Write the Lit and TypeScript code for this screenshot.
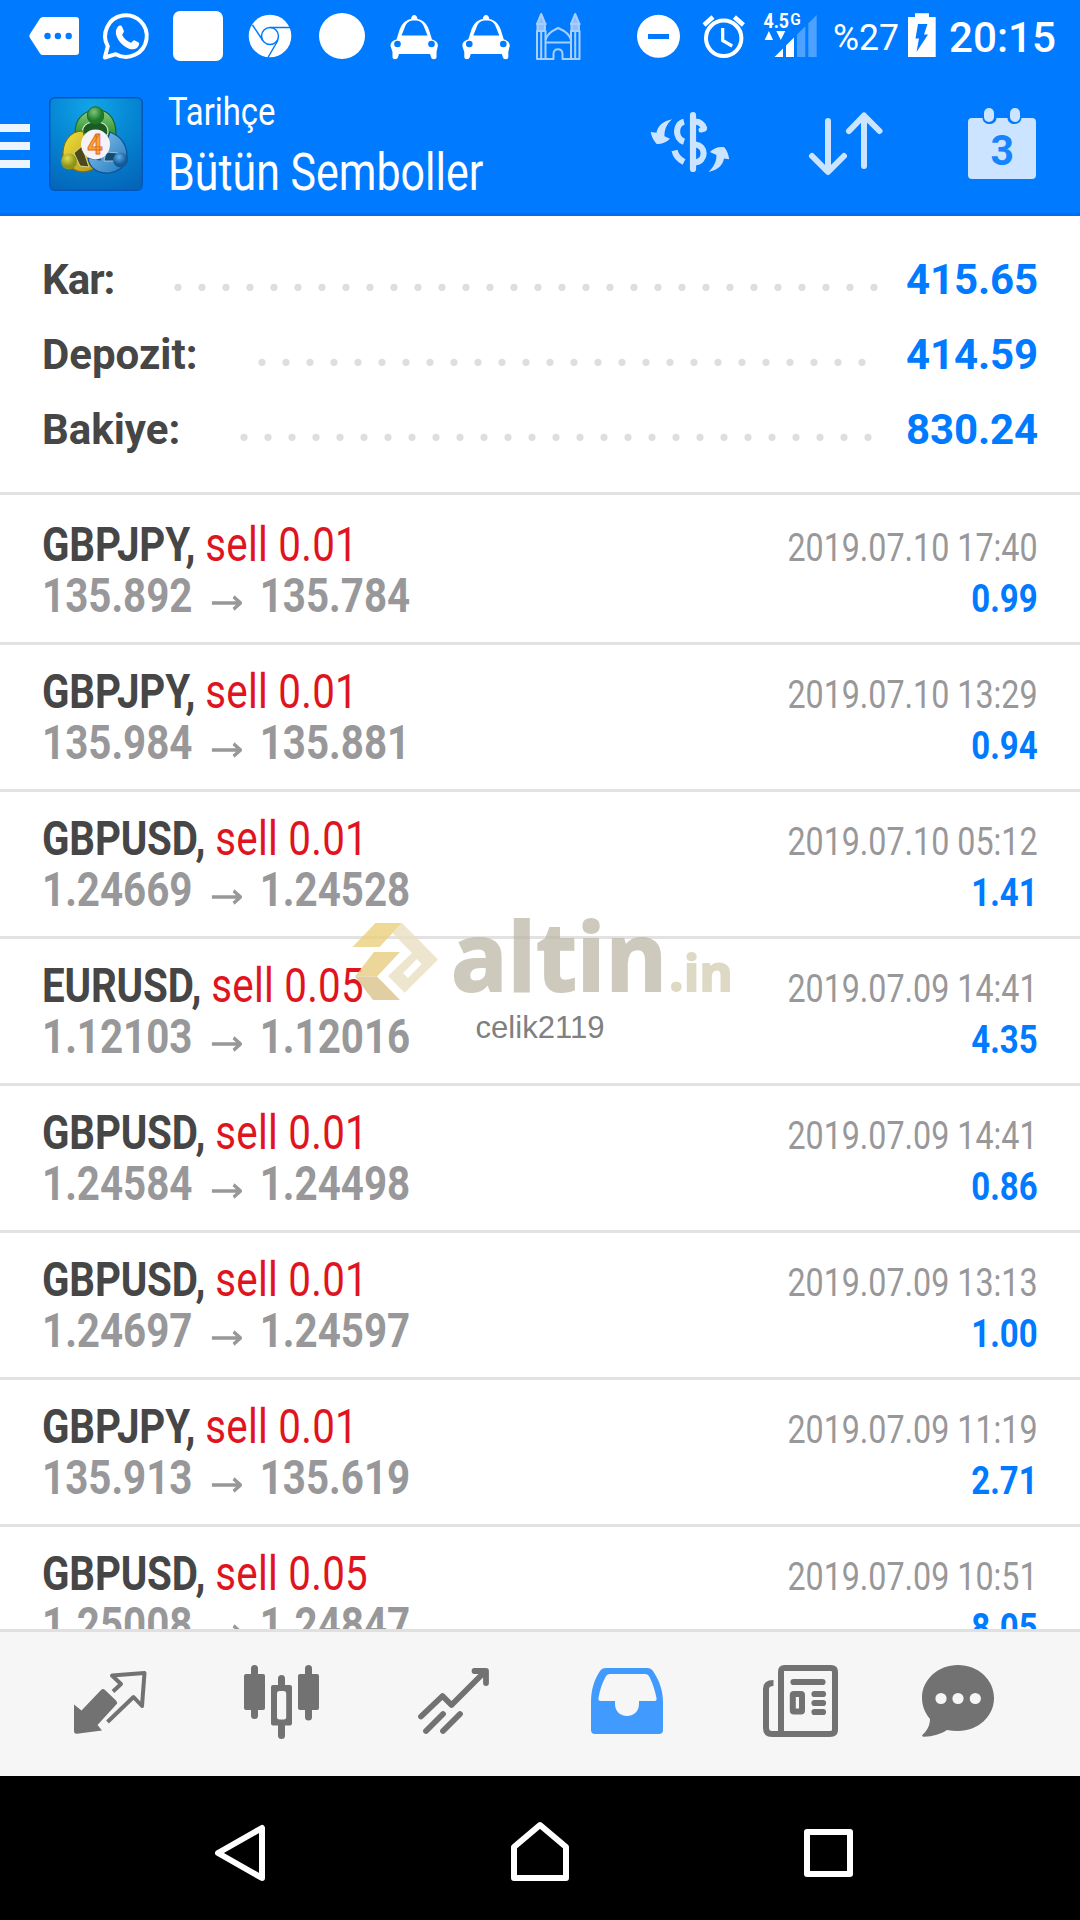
import { LitElement, html, svg, css } from "lit";
import { customElement, property } from "lit/decorators.js";
import { classMap } from "lit/directives/class-map.js";

interface Deal {
  symbol: string;
  volume: string;
  open: string;
  close: string;
  time: string;
  profit: string;
}

const deals: Deal[] = [
  { symbol: "GBPJPY", volume: "0.01", open: "135.892", close: "135.784", time: "2019.07.10 17:40", profit: "0.99" },
  { symbol: "GBPJPY", volume: "0.01", open: "135.984", close: "135.881", time: "2019.07.10 13:29", profit: "0.94" },
  { symbol: "GBPUSD", volume: "0.01", open: "1.24669", close: "1.24528", time: "2019.07.10 05:12", profit: "1.41" },
  { symbol: "EURUSD", volume: "0.05", open: "1.12103", close: "1.12016", time: "2019.07.09 14:41", profit: "4.35" },
  { symbol: "GBPUSD", volume: "0.01", open: "1.24584", close: "1.24498", time: "2019.07.09 14:41", profit: "0.86" },
  { symbol: "GBPUSD", volume: "0.01", open: "1.24697", close: "1.24597", time: "2019.07.09 13:13", profit: "1.00" },
  { symbol: "GBPJPY", volume: "0.01", open: "135.913", close: "135.619", time: "2019.07.09 11:19", profit: "2.71" },
  { symbol: "GBPUSD", volume: "0.05", open: "1.25008", close: "1.24847", time: "2019.07.09 10:51", profit: "8.05" },
];

const totals = [
  { label: "Kar:", value: "415.65", from: 177.5, dots: 30, tight: true },
  { label: "Depozit:", value: "414.59", from: 261, dots: 26, tight: false },
  { label: "Bakiye:", value: "830.24", from: 242.8, dots: 27, tight: false },
];

// Each icon is drawn in screen units; the viewBox selects the slice it occupies.
const slice = (x: number, y: number, w: number, h: number, body: unknown) =>
  html`<svg width=${w} height=${h} viewBox="${x} ${y} ${w} ${h}">${body}</svg>`;

const taxi = (dx: number) => svg`<g transform="translate(${dx} 0)">
  <path fill="#fff" d="M391 47.500c-1.500-3.500 1-7 5.500-8l2.500-8c2-7 6-11.500 12-12.500.5-5.500 6-5.500 6.500 0 6 1 10 5.500 12 12.500l2.500 8c4.500 1 7 4.500 5.500 8l-1 4.500v5c0 3-5 3-5.500 0l-1-3h-31l-1 3c-.5 3-5.500 3-5.500 0v-5z"/>
  <path fill="#007aff" d="M401.500 35.500l3-7.500c2-6 5-7.500 10-7.500s8 1.500 10 7.500l3 7.500z"/>
  <circle cx="397.500" cy="44" r="3.300" fill="#007aff"/><circle cx="431.500" cy="44" r="3.300" fill="#007aff"/>
</g>`;

@customElement("status-bar")
class StatusBar extends LitElement {
  static styles = css`
    :host { display: flex; height: 72px; color: #fff; }
    svg { display: block; flex: none; }
    text { font-family: Roboto, sans-serif; fill: #fff; }
  `;
  render() {
    return html`
      ${slice(0, 0, 91, 72, svg`
        <path fill="#fff" d="M43 17h33a3 3 0 0 1 3 3v32a3 3 0 0 1-3 3H43q-2 0-3-1.500L30 38q-1.500-2 0-4l10-15.500Q41 17 43 17z"/>
        <g fill="#007aff"><circle cx="47.500" cy="36" r="3.200"/><circle cx="57.900" cy="36" r="3.200"/><circle cx="68.700" cy="36" r="3.200"/></g>`)}
      ${slice(91, 0, 70, 72, svg`
        <path fill="none" stroke="#fff" stroke-width="4" stroke-linejoin="round" d="M104.800 57.500l3-11.300a20.800 20.800 0 1 1 8 8z"/>
        <path fill="#fff" d="M118 26.500c1.500-1.500 3.500-1.200 4.200.4l1.700 4.200c.5 1.300-2.200 3-1.600 4.200 2 3.600 4.500 5.800 8 7.300 1.400.6 2.700-3 4-2.400l4.300 2.300c1.500.9-.3 4.500-1.700 5.500-5 3.500-11.500-.5-15.400-4.300-4.200-4.200-8.300-11.700-3.500-17.200z"/>`)}
      ${slice(161, 0, 74, 72, svg`<rect x="173" y="11" width="50" height="50" rx="7" fill="#fff"/>`)}
      ${slice(235, 0, 71, 72, svg`
        <circle cx="270" cy="36" r="21.300" fill="#fff"/>
        <g fill="none" stroke="#007aff" stroke-width="1.500">
          <circle cx="270" cy="36" r="8.500"/>
          <path d="M270 27.500h20M262.500 40L252.500 25M277.800 40.500L268 57.500"/>
        </g>`)}
      ${slice(306, 0, 71, 72, svg`<circle cx="342" cy="36" r="23" fill="#fff"/>`)}
      ${slice(377, 0, 73, 72, taxi(0))}
      ${slice(450, 0, 72, 72, taxi(71.8))}
      ${slice(522, 0, 100, 72, svg`
        <g fill="none" stroke="#a9cfff" stroke-width="2" stroke-linejoin="round">
          <path d="M537 59V31h8.500v28zM571 59V31h8.500v28zM541.200 31v28M575.200 31v28"/>
          <path d="M545.500 59h8v-5c0-6.500 9-6.500 9 0v5h8.500M545.500 42.500h25.500M545.500 40c1-5 6-9 12.700-12 6.800 3 12 7 12.800 12"/>
          <path d="M537.500 31v-8l3.700-9 3.700 9v8zM571.500 31v-8l3.700-9 3.700 9v8z" fill="#8ec0ff"/>
          <path d="M536 24h10.500M570 24h10.500"/>
        </g>`)}
      ${slice(622, 0, 70, 72, svg`<circle cx="658.500" cy="36.300" r="21.500" fill="#fff"/><path fill="#007aff" d="M648 34h21v5h-21z"/>`)}
      ${slice(692, 0, 64, 72, svg`
        <g fill="none" stroke="#fff" stroke-width="4">
          <circle cx="723.700" cy="38.300" r="17.700"/>
          <path d="M722.700 28v12.500l9.500 5.500" stroke-width="3.200"/>
          <path d="M704 25l9-8M743.400 25l-9-8" stroke-width="4.600"/>
        </g>`)}
      ${slice(756, 0, 70, 72, svg`
        <text x="763.500" y="27.700" font-size="20.500" font-weight="700" textLength="25.500" lengthAdjust="spacingAndGlyphs">4.5</text>
        <text x="790.300" y="25.300" font-size="16" font-weight="600" textLength="10.500" lengthAdjust="spacingAndGlyphs">G</text>
        <path fill="#fff" d="M764.700 40l4.200-9 4.200 9zM776.300 31h9l-4.500 9zM774.500 57l8.500-8.500V57zM786 45.500l8-8V57h-8z"/>
        <path fill="#4da2ff" d="M797 34.500l8.300-8.300V57H797zM808.300 23.300l8.400-8.400V57h-8.400z"/>`)}
      ${slice(826, 0, 76, 72, svg`<text x="833" y="50.300" font-size="37" textLength="66" lengthAdjust="spacingAndGlyphs">%27</text>`)}
      ${slice(902, 0, 40, 72, svg`
        <path fill="#fff" d="M908 17h7v-3.700h14V17h6.700v40H908z"/>
        <path fill="#007aff" d="M918 24h9.500l-3.500 10.500h4L916.500 52l2.500-13.500h-3.500z"/>`)}
      ${slice(942, 0, 138, 72, svg`<text x="949" y="52" font-size="42" font-weight="500" textLength="107" lengthAdjust="spacingAndGlyphs">20:15</text>`)}
    `;
  }
}

@customElement("title-bar")
class TitleBar extends LitElement {
  static styles = css`
    :host { display: flex; height: 144px; box-sizing: border-box; border-bottom: 3px solid #006fee; color: #fff; }
    svg { display: block; flex: none; }
    .titles { flex: 1; padding-top: 16px; font-family: Roboto, sans-serif; white-space: nowrap; }
    .caption { font-size: 39px; line-height: 48px; transform: scaleX(0.842); transform-origin: left; }
    .name { font-size: 51px; line-height: 73px; transform: scaleX(0.842); transform-origin: left; }
    text { font-family: Roboto, sans-serif; }
  `;
  render() {
    return html`
      ${slice(0, 72, 44, 141, svg`<path fill="#ebf4ff" d="M0 124h30v8H0zM0 142h30v8H0zM0 160h30v8H0z"/>`)}
      ${slice(44, 72, 124, 141, svg`
        <defs>
          <radialGradient id="bg" cx=".45" cy=".1" r="1"><stop offset="0" stop-color="#11a5e8"/><stop offset=".5" stop-color="#0584d2"/><stop offset="1" stop-color="#0464b8"/></radialGradient>
          <linearGradient id="gr" x2="0" y2="1"><stop offset="0" stop-color="#8fcb8a"/><stop offset=".5" stop-color="#4aa545"/><stop offset="1" stop-color="#1d7a22"/></linearGradient>
          <linearGradient id="ye" x2="1" y2="1"><stop offset="0" stop-color="#f2e43c"/><stop offset="1" stop-color="#b5951a"/></linearGradient>
          <linearGradient id="bl" x2="1" y2="1"><stop offset="0" stop-color="#8cc6ee"/><stop offset="1" stop-color="#1f78bd"/></linearGradient>
          <radialGradient id="hg" cx=".4" cy=".3"><stop offset="0" stop-color="#7fc47c"/><stop offset="1" stop-color="#1c7a2a"/></radialGradient>
          <radialGradient id="hy" cx=".4" cy=".3"><stop offset="0" stop-color="#e0dc50"/><stop offset="1" stop-color="#8f9418"/></radialGradient>
          <radialGradient id="hb" cx=".4" cy=".3"><stop offset="0" stop-color="#62b0e6"/><stop offset="1" stop-color="#125a9c"/></radialGradient>
        </defs>
        <rect x="49.750" y="97.750" width="92.500" height="92.500" rx="5" fill="url(#bg)" stroke="#0457b8" stroke-width="1.500"/>
        <g stroke-linejoin="round" stroke-width="1.200">
          <path d="M76 140c-4-17 5-29 19.500-30S119 122 115 143l-9-4-22 0z" fill="url(#gr)" stroke="#16662a"/>
          <path d="M83 134c-2-8 4-12 12.500-12s14 4 12 13z" fill="#1c5a24" stroke="#c4e6bf"/>
          <path d="M83 131c-14 0-21 12-20 26 0 4 2 6 5 8 8 8 18 9 27 3l-6-14z" fill="url(#ye)" stroke="#7c6d14"/>
          <path d="M82 146l-8 7 6 13 9 1z" fill="#4a4a1c" stroke="#efe9a0" stroke-width=".8"/>
          <path d="M110 132c13 5 18 15 17 29-2 5-9 11-18 12-12 1-20-6-21-15l12 2z" fill="url(#bl)" stroke="#0e5190"/>
          <path d="M106 152l12 1-4 8-10 0z" fill="#164a70" stroke="#b5daf2" stroke-width=".8"/>
        </g>
        <ellipse cx="95.500" cy="115.500" rx="8.200" ry="8.800" fill="url(#hg)" stroke="#1c6a26"/>
        <circle cx="69" cy="161.500" r="8" fill="url(#hy)"/>
        <circle cx="120.500" cy="160" r="7.500" fill="url(#hb)"/>
        <ellipse cx="95.500" cy="144.500" rx="14.500" ry="15" fill="#f4f2f6"/>
        <text x="95" y="154" font-size="27" font-weight="700" text-anchor="middle" fill="#ffa42e" stroke="#e0651e" stroke-width=".8">4</text>`)}
      <div class="titles">
        <div class="caption">Tarihçe</div>
        <div class="name">Bütün Semboller</div>
      </div>
      ${slice(620, 72, 150, 141, svg`
        <g fill="none" stroke="#cce4ff" stroke-width="6.200">
          <path d="M684 121.700c-9 2-9.500 17 0 20M695 121.700c5 0 8 3 9.500 7.500"/>
          <path d="M674.500 150.500c1.500 6 4.500 9 9.500 11.500M695 144.500c11.500 1 11.500 16.500 0 18"/>
          <path d="M701 130l3.300-1" stroke-linecap="round" stroke-width="5"/>
          <path d="M693 115v54" stroke-linecap="round"/>
        </g>
        <path fill="#cce4ff" d="M672 119.300c-9.500 2-14.500 7-15.500 13.500l-5.800-.8c.8 5 3.500 9.500 6 12 4.500.3 9-1.300 13.300-5.300l-5.500-2.500c-.3-6 2-12 7.500-16.900z"/>
        <path fill="#cce4ff" d="M708.500 172c9.500-2 14.500-7 15.500-13.500l5.200.8c-.8-5-2.500-9.500-5-12-5.500-.8-10 .8-14.300 4.800l6.500 3c.3 6-2.400 12-7.900 16.900z"/>`)}
      ${slice(770, 72, 150, 141, svg`
        <g fill="none" stroke="#cce4ff" stroke-width="6" stroke-linecap="round" stroke-linejoin="round">
          <path d="M828 121v50M812 156l16 16 16-16M864 166v-50M849 131l15-15.500L879.500 131"/>
        </g>`)}
      ${slice(920, 72, 160, 141, svg`
        <path fill="#cce4ff" d="M972 118h10.500c.5 8 13.500 8 14 0h11c.5 8 13.500 8 14 0H1032a4 4 0 0 1 4 4v53a4 4 0 0 1-4 4h-60a4 4 0 0 1-4-4v-53a4 4 0 0 1 4-4z"/>
        <rect x="984" y="108" width="10" height="14" rx="5" fill="#cce4ff"/><rect x="1010" y="108" width="10" height="14" rx="5" fill="#cce4ff"/>
        <text x="990.500" y="165" font-size="43" font-weight="700" textLength="23.500" lengthAdjust="spacingAndGlyphs" fill="#1684ff">3</text>`)}
    `;
  }
}

@customElement("balance-summary")
class BalanceSummary extends LitElement {
  static styles = css`
    :host { display: block; height: 279px; box-sizing: border-box; padding-top: 26px; border-bottom: 3px solid #e2e2e2; font-family: Roboto, sans-serif; }
    .line { display: grid; grid-template-columns: 1fr auto; height: 75px; padding: 0 42px; line-height: 75px; font-size: 42px; font-weight: 700; }
    .label { display: flex; color: #464646; }
    .value { color: #007aff; letter-spacing: -0.1px; }
    .name { flex: 1; }
    .tight { letter-spacing: -1px; }
    svg { display: block; flex: none; }
  `;
  render() {
    return totals.map(
      (t) => html`<div class="line">
        <div class="label">
          <span class=${classMap({ name: true, tight: t.tight })}>${t.label}</span>
          <svg width=${915 - t.from} height="75" viewBox="${t.from - 10} 0 ${915 - t.from} 75">
            ${Array.from({ length: t.dots }, (_, i) => svg`<circle cx=${t.from + i * 24} cy="45.300" r="3.600" fill="#dedede"/>`)}
          </svg>
        </div>
        <span class="value">${t.value}</span>
      </div>`,
    );
  }
}

@customElement("deal-row")
class DealRow extends LitElement {
  @property({ attribute: false }) deal!: Deal;
  static styles = css`
    :host { display: flex; justify-content: space-between; flex: none; height: 147px; box-sizing: border-box; padding: 21px 42px 0; border-bottom: 3px solid #e2e2e2; font-family: Roboto, sans-serif; white-space: nowrap; }
    .left { font-size: 48px; line-height: 51px; transform: scaleX(0.84); transform-origin: left; }
    .symbol { font-weight: 700; color: #464646; letter-spacing: -0.2px; }
    .side { color: #e0141e; letter-spacing: 0.3px; }
    .prices { display: flex; font-weight: 700; color: #98989a; }
    .arrow { display: block; margin: 0 21.5px 0 22.5px; }
    .right { padding-top: 3px; font-size: 39.5px; line-height: 51px; text-align: right; }
    .time { color: #98989a; transform: scaleX(0.816); transform-origin: right; }
    .profit { font-weight: 700; color: #007aff; transform: scaleX(0.835); transform-origin: right; }
  `;
  render() {
    const d = this.deal;
    return html`
      <div class="left">
        <div><span class="symbol">${d.symbol},</span> <span class="side">sell ${d.volume}</span></div>
        <div class="prices">
          <span>${d.open}</span>
          <svg class="arrow" width="36" height="51" viewBox="0 0 36 51">
            <path d="M0 33h34M26 26.800l8.300 6.200-8.300 6.200" fill="none" stroke="#98989a" stroke-width="3.600"/>
          </svg>
          <span>${d.close}</span>
        </div>
      </div>
      <div class="right">
        <div class="time">${d.time}</div>
        <div class="profit">${d.profit}</div>
      </div>
    `;
  }
}

@customElement("site-mark")
class SiteMark extends LitElement {
  static styles = css`
    :host { display: block; }
    svg { display: block; }
    .word { font-family: "Open Sans", sans-serif; font-weight: 700; }
    .user { font-family: "Liberation Sans", sans-serif; }
  `;
  render() {
    return html`<svg width="400" height="140" viewBox="345 910 400 140">
      <g opacity=".8">
        <path fill="#ebd07e" d="M375.500 923H402l-22.500 24H352.500z"/>
        <path fill="#e8cc80" d="M374 952h26l-23 24.500h-22z"/>
        <path fill="#dcc48a" d="M355 976.500h22L400 1000h-27z"/>
        <path fill="#eadfc4" fill-rule="evenodd" d="M402 923l36 36.500-33.300 33.200L388 976l24-23-19.500-20zM417 959l-14 14 5 5 13.700-14z"/>
      </g>
      <g opacity=".7">
        <text class="word" x="451" y="991" font-size="95" fill="#b9b4a2" stroke="#b9b4a2" stroke-width="2" textLength="216" lengthAdjust="spacingAndGlyphs">altin</text>
        <text class="word" x="669" y="991" font-size="51" fill="#d1c9ac" stroke="#d1c9ac" stroke-width="1.800" textLength="64" lengthAdjust="spacingAndGlyphs">.in</text>
      </g>
      <text class="user" x="475.500" y="1037.700" font-size="30.500" fill="#808080" textLength="129" lengthAdjust="spacingAndGlyphs">celik2119</text>
    </svg>`;
  }
}

@customElement("tab-bar")
class TabBar extends LitElement {
  static styles = css`
    :host { display: flex; flex: none; height: 147px; box-sizing: border-box; padding-left: 24px; border-top: 3px solid #e0e0e0; background: #f6f6f6; }
    svg { display: block; flex: none; }
  `;
  render() {
    return html`
      ${slice(24, 1632, 172, 144, svg`
        <path fill="#727272" d="M74 1704.500l7.500 6L101 1690q2-2 4 0l11 10.500q2 2 .3 4L97.500 1725l4.500 5.500-25 3.300q-3 .3-3-3z"/>
        <path fill="none" stroke="#727272" stroke-width="4" stroke-linejoin="round" d="M113 1691.500l8-7.500-9-8.500 32.500-2.500-2.500 33-8.500-9-26 25"/>`)}
      ${slice(196, 1632, 172, 144, svg`
        <g fill="#727272">
          <rect x="244" y="1674" width="21" height="36" rx="2"/><rect x="251" y="1665" width="7" height="54" rx="3.500"/>
          <rect x="298" y="1674" width="21" height="36" rx="2"/><rect x="305" y="1665" width="7" height="55.500" rx="3.500"/>
          <rect x="271" y="1685" width="21" height="40.500" rx="2"/><rect x="278" y="1675" width="7" height="64" rx="3.500"/>
        </g>
        <rect x="277" y="1691" width="9.200" height="28.500" rx="2.500" fill="#f6f6f6"/>`)}
      ${slice(368, 1632, 172, 144, svg`
        <g fill="none" stroke="#727272" stroke-width="5.800" stroke-linecap="round" stroke-linejoin="round">
          <path d="M421 1716.500l21.500-20.500 9 9 34-34M474.500 1671h11.500v12"/>
          <path d="M426 1731l17-17M443 1731l17-17"/>
        </g>`)}
      ${slice(540, 1632, 172, 144, svg`
        <path fill="#419bff" fill-rule="evenodd" d="M606 1668h41q4 0 6 3c6 9 10 19 10 31v28q0 4-4 4h-64q-4 0-4-4v-28c0-12 3-22 9-31q2-3 6-3zM610 1674q-3 0-4.500 3-5 9-7 21-.3 3 2 3H615v3c0 16 24 16 24 0v-3h15.500q2.500 0 2-3-2.500-12-7-21-1.500-3-4.500-3z"/>`)}
      ${slice(712, 1632, 172, 144, svg`
        <path fill="none" stroke="#727272" stroke-width="6" d="M773.500 1683q-7.500 0-7.500 6v39q0 6 6 6h58q5 0 5-4v-58q0-4-4-4h-46.500q-3.500 0-3.500 4v62"/>
        <path fill="#727272" d="M768 1731h68v3h-68z"/>
        <g stroke="#727272" stroke-width="6.200" stroke-linecap="round" fill="none">
          <path d="M793.500 1682h29M814.500 1694h8.500M814.500 1703h8.500M814.500 1712h8.500"/>
          <rect x="792.800" y="1694" width="9.200" height="17.500" rx="1" stroke-width="6"/>
        </g>`)}
      ${slice(884, 1632, 172, 144, svg`
        <path fill="#727272" d="M958 1665c20 0 36 14.500 36 33s-16 33-36 33q-5.500 0-11-1c-6 4-14 6.500-23 6.800-2 0-2.500-1.300-1-2.500 4-3.500 7-9 7-15.300-5-6-8-13-8-21 0-18.500 16-33 36-33z"/>
        <g fill="#f6f6f6"><circle cx="941" cy="1698.500" r="5.600"/><circle cx="958" cy="1698.500" r="5.600"/><circle cx="975.300" cy="1698.500" r="5.600"/></g>`)}
    `;
  }
}

@customElement("system-nav")
class SystemNav extends LitElement {
  static styles = css`
    :host { display: flex; justify-content: center; flex: none; height: 144px; background: #000; }
    svg { display: block; flex: none; }
    .keys { fill: none; stroke: #fff; stroke-width: 6px; stroke-linejoin: round; }
  `;
  render() {
    return html`
      ${slice(96, 1776, 296, 144, svg`<path class="keys" d="M262 1828v50l-44-25z"/>`)}
      ${slice(392, 1776, 296, 144, svg`<path class="keys" d="M514 1878v-31l26-22 26 22v31z"/>`)}
      ${slice(688, 1776, 296, 144, svg`<path class="keys" d="M807 1832h43v42h-43z"/>`)}
    `;
  }
}

@customElement("app-root")
class AppRoot extends LitElement {
  static styles = css`
    :host { display: flex; flex-direction: column; position: relative; width: 1080px; height: 1920px; overflow: hidden; background: #fff; }
    .top { flex: none; background: #007aff; }
    .list { flex: 1; min-height: 0; display: flex; flex-direction: column; padding-top: 3px; overflow: hidden; }
    .mark { position: absolute; left: 345px; top: 910px; }
  `;
  render() {
    return html`
      <header class="top"><status-bar></status-bar><title-bar></title-bar></header>
      <balance-summary></balance-summary>
      <main class="list">${deals.map((d) => html`<deal-row .deal=${d}></deal-row>`)}</main>
      <tab-bar></tab-bar>
      <system-nav></system-nav>
      <site-mark class="mark"></site-mark>
    `;
  }
}
